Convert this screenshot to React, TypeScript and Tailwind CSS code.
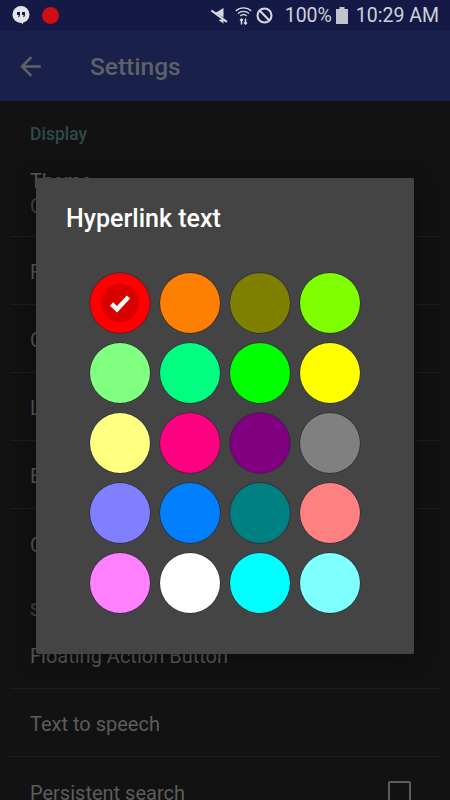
import React from 'react';

const swatches = [
  '#ff0000', '#ff8000', '#808000', '#80ff00',
  '#80ff80', '#00ff80', '#00ff00', '#ffff00',
  '#ffff80', '#ff0080', '#800080', '#808080',
  '#8080ff', '#0080ff', '#008080', '#ff8080',
  '#ff80ff', '#ffffff', '#00ffff', '#80ffff',
];

const rows = ['Font size', 'Colors', 'Layout', 'Behavior'];

const Row = ({ label, last }: { label: string; last?: boolean }) => (
  <div className={`h-[68px] mx-[10px] px-5 pt-[3px] flex items-center text-[20px] text-[#5c5c5c] ${last ? '' : 'border-b border-[#1f1f1f]'}`}>
    <span className="flex-1">{label}</span>
  </div>
);

const App: React.FC = () => {
  return (
    <div className="relative w-[450px] h-[800px] overflow-hidden bg-[#121212] font-['Roboto',sans-serif]">
      {/* status bar */}
      <div className="h-[31px] bg-[#141945] flex items-center pl-3 pr-[11px] text-[#d0d1d8]">
        <svg width="18" height="19" viewBox="0 0 17 19" fill="#e4e4e8">
          <circle cx="8.500" cy="8.500" r="8.500" />
          <path d="M7 15h3.500v3.500z" />
          <path d="M4.500 6h3v3c0 1.200-.7 2-1.700 2.200v-1.200c.4-.2.6-.5.6-1H4.500zM9.500 6h3v3c0 1.200-.7 2-1.700 2.200v-1.200c.4-.2.6-.5.6-1H9.500z" fill="#141945" />
        </svg>
        <div className="ml-[12px] w-[17px] h-[17px] rounded-full bg-[#d00c14]" />
        <div className="flex-1" />
        <svg width="17" height="16" viewBox="0 0 17 16" fill="#d8d9df">
          <path d="M3 4h3l6.500-4v9.500zM12.500 11v4.500l-5-3.500z" />
          <path d="M0.800 1.500 16.500 13l-1.200 1.800L0 3.500z" />
        </svg>
        <svg className="ml-[7px]" width="17" height="18" viewBox="0 0 17 18" fill="none" stroke="#d8d9df" strokeWidth="1.300">
          <path d="M0.800 4a11 11 0 0 1 15.400 0M3 6.500a8 8 0 0 1 11 0M5.200 9a5 5 0 0 1 6.600 0" />
          <path d="M6.500 17.500v-5M5 13.500 6.500 12 8 13.500M10.500 11.500v5M9 15.500 10.500 17 12 15.500" strokeWidth="1.500" />
        </svg>
        <svg className="ml-[4px]" width="17" height="17" viewBox="0 0 18 18" fill="none" stroke="#d8d9df" strokeWidth="2.200">
          <circle cx="9" cy="9" r="7.400" />
          <path d="M3.800 3.800l10.400 10.400" />
        </svg>
        <span className="ml-[12px] text-[19.500px] leading-none">100%</span>
        <svg className="ml-[4px]" width="12" height="17" viewBox="0 0 12 17" fill="#c4c5cc">
          <path d="M3.500 0h5v2H12v15H0V2h3.500z" />
        </svg>
        <span className="ml-[8px] text-[19.500px] leading-none">10:29 AM</span>
      </div>

      {/* app bar */}
      <div className="h-[70px] bg-[#19204a] flex items-center pl-[15px] text-[#5f6068]">
        <svg width="31" height="31" viewBox="0 0 24 24" fill="currentColor">
          <path d="M20 11H7.830l5.590-5.590L12 4l-8 8 8 8 1.410-1.410L7.830 13H20z" />
        </svg>
        <span className="ml-[44px] pt-[2px] text-[24.500px] font-medium">Settings</span>
      </div>

      {/* settings list under the dialog */}
      <div className="px-[30px] pt-[22px] text-[17.500px] font-medium leading-[22px] text-[#2f4a49]">Display</div>
      <div className="h-[92px] mx-[10px] px-5 pt-[24px] border-b border-[#1f1f1f] text-[20px] leading-[25px] text-[#5c5c5c]">
        <div>Theme</div>
        <div className="text-[#4a4a4a]">Choose a theme</div>
      </div>
      {rows.map(r => (
        <Row key={r} label={r} />
      ))}
      <Row label="Content" last />
      <div className="px-[30px] pt-[22px] text-[17.500px] font-medium leading-[22px] text-[#2f4a49]">Services</div>
      <Row label="Floating Action Button" />
      <Row label="Text to speech" />
      <div className="h-[68px] mx-[10px] pl-5 pr-[29px] pt-[3px] flex items-center text-[20px] text-[#5c5c5c]">
        <span className="flex-1">Persistent search</span>
        <div className="w-[23px] h-[23px] rounded-[2px] border-2 border-[#5c5c5c]" />
      </div>

      {/* color picker dialog */}
      <div className="absolute left-[36px] top-[178px] w-[378px] h-[476px] bg-[#444444] rounded-[2px] shadow-[0_4px_24px_rgba(0,0,0,0.45)]">
        <div className="pl-[30px] pt-[26px] text-[25px] leading-[30px] font-medium text-white">Hyperlink text</div>
        <div className="mt-[39px] ml-[54px] grid grid-cols-[repeat(4,60px)] gap-[10px]">
          {swatches.map((c, i) => (
            <div
              key={c}
              className="w-[60px] h-[60px] rounded-full shadow-[0_0_0_0.5px_rgba(16,16,48,0.7)] flex items-center justify-center"
              style={{ backgroundColor: c }}
            >
              {i === 0 && (
                <div className="w-[38px] h-[38px] rounded-full bg-[#d90000] flex items-center justify-center">
                  <svg width="24" height="24" viewBox="0 0 24 24" fill="none" stroke="#ffffff" strokeWidth="4.500">
                    <path d="M3.500 13 9 18.200 20.500 6" />
                  </svg>
                </div>
              )}
            </div>
          ))}
        </div>
      </div>
    </div>
  );
};

export default App;
